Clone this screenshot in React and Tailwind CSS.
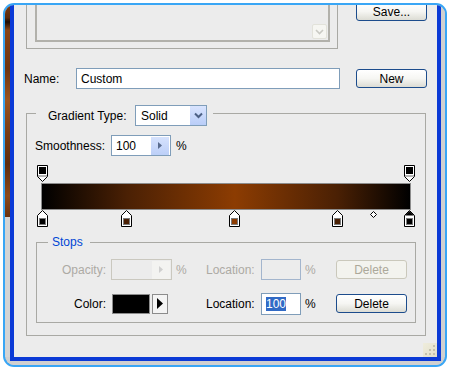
import React from "react";

const xpBtn =
  "flex items-center justify-center rounded-[3px] border border-[#1c4c8c] bg-linear-to-b from-white via-[#f6f6f3] to-[#dcdcd4] text-black";

function TopStop() {
  return (
    <svg width="11" height="17" viewBox="0 0 11 17" className="block">
      <path d="M0.5 0.5H10.5V11.5L5.5 16.5L0.5 11.5Z" fill="#fff" stroke="#000" />
      <rect x="2" y="2" width="7" height="7" fill="#000" />
      <rect x="1" y="10" width="9" height="2" fill="#b4b4b4" />
    </svg>
  );
}

function BottomStop({ color, selected }) {
  return (
    <svg width="11" height="17" viewBox="0 0 11 17" className="block">
      <path d="M5.5 0.5L10.5 5.5V16.5H0.5V5.5Z" fill="#fff" stroke="#000" />
      {selected && <path d="M5.5 1L10 5.5H1Z" fill="#000" />}
      <rect x="2.5" y="8.5" width="6" height="6" fill={color} stroke="#7a7a7a" />
    </svg>
  );
}

function Diamond() {
  return (
    <svg width="7" height="7" viewBox="0 0 7 7" className="block">
      <path d="M3.5 0.5L6.5 3.5L3.5 6.5L0.5 3.5Z" fill="#fff" stroke="#000" />
    </svg>
  );
}

const W = 367.5;
const colorStops = [
  { p: 0, c: "#000000" },
  { p: 0.23, c: "#4a2004" },
  { p: 0.524, c: "#8c3c02" },
  { p: 0.803, c: "#4a2004" },
  { p: 1, c: "#000000", sel: true },
];

export default function App() {
  return (
    <div className="w-[450px] h-[370px] bg-white pt-[3px] pl-[3px] pr-[3px] pb-[3px] font-['Liberation_Sans',Arial,sans-serif] text-[12px] text-black">
      <div className="h-[364px] rounded-[11px] border-2 border-[#39a6f5] overflow-hidden bg-[#cfcfcf] flex flex-col">
        <div className="flex h-[352px]">
          {/* photo strip */}
          <div className="w-[5px] flex flex-col">
            <div className="h-[212px] bg-[linear-gradient(to_bottom,#7a3a12_0%,#5a2a0c_6%,#1a0a04_8%,#8a4516_12%,#6e3410_30%,#9a5420_45%,#7a3d14_60%,#5e2c0e_75%,#8c4a1a_90%,#6a3210_100%)]" />
            <div className="flex-1 bg-[#d4d4d4]" />
          </div>
          <div className="w-[4px] bg-[#0b3ad6]" />
          {/* dialog */}
          <div className="relative w-[423px] bg-[#ececec] overflow-hidden flex flex-col">
            {/* top row */}
            <div className="flex h-[44px] items-end shrink-0">
              <div className="ml-[12px] w-[312px] h-[70px] border border-[#a9a9a4] pl-[8px] pr-[7px] pb-[6px] flex">
                <div className="relative flex-1 border-2 border-[#b2b1ab] bg-[#ececec]">
                  <div className="absolute right-[1px] bottom-[1px] w-[15px] h-[15px] rounded-[2px] bg-[#f6f6f2] border border-[#e2e2da] flex items-center justify-center">
                    <svg width="9" height="6" viewBox="0 0 9 6">
                      <path d="M1 1L4.5 4.5L8 1" fill="none" stroke="#c9c9c3" strokeWidth="1.6" />
                    </svg>
                  </div>
                </div>
              </div>
              <div className={`self-start -mt-[3px] ml-[18px] w-[71px] h-[19px] ${xpBtn}`}>Save...</div>
            </div>

            {/* name row */}
            <div className="mt-[19px] flex items-center h-[21px] pl-[10px] shrink-0">
              <div className="w-[52px]">Name:</div>
              <div className="w-[264px] h-[21px] border border-[#7f9db9] bg-white flex items-center pl-[4px]">Custom</div>
              <div className={`ml-[16px] w-[71px] h-[19px] ${xpBtn}`}>New</div>
            </div>

            {/* gradient type groupbox */}
            <div className="ml-[12px] mt-[24px] w-[400px] h-[223px] border border-[#a9a9a4] flex flex-col shrink-0">
              <div className="-mt-[9px] ml-[9px] self-start bg-[#ececec] pl-[12px] pr-[6px] flex items-center h-[21px]">
                <div className="w-[87px]">Gradient Type:</div>
                <div className="w-[72px] h-[21px] border border-[#7f9db9] bg-white flex items-center">
                  <div className="flex-1 pl-[5px]">Solid</div>
                  <div className="w-[16px] h-[19px] mr-[0px] bg-linear-to-b from-[#d9e4fe] to-[#b9cdf8] flex items-center justify-center">
                    <svg width="9" height="7" viewBox="0 0 9 7">
                      <path d="M1 1.5L4.5 5L8 1.5" fill="none" stroke="#4d6185" strokeWidth="2" />
                    </svg>
                  </div>
                </div>
              </div>

              <div className="mt-[9px] pl-[8px] flex items-center h-[21px]">
                <div className="w-[76px]">Smoothness:</div>
                <div className="w-[60px] h-[21px] border border-[#7f9db9] bg-white flex items-center">
                  <div className="flex-1 pl-[4px]">100</div>
                  <div className="w-[18px] h-[18px] mr-[1px] bg-linear-to-b from-[#d6e2fd] to-[#bccff8] flex items-center justify-center">
                    <svg width="4" height="7" viewBox="0 0 4 7">
                      <path d="M0 0L4 3.5L0 7Z" fill="#5a6c8f" />
                    </svg>
                  </div>
                </div>
                <div className="ml-[5px]">%</div>
              </div>

              {/* slider */}
              <div className="ml-[14px] mt-[9px] w-[370px] flex flex-col">
                <div className="relative h-[17px]">
                  <div className="absolute top-0" style={{ left: 1 + 0 * W - 5.5 }}>
                    <TopStop />
                  </div>
                  <div className="absolute top-0" style={{ left: 1 + 1 * W - 5.5 }}>
                    <TopStop />
                  </div>
                </div>
                <div className="mt-[1px] h-[27px] border border-[#8c8c8c] bg-[linear-gradient(to_right,#000_0%,#4a2004_23%,#8c3c02_52.4%,#4a2004_80.3%,#000_100%)]" />
                <div className="relative h-[17px]">
                  {colorStops.map((s, i) => (
                    <div key={i} className="absolute top-0" style={{ left: 1 + s.p * W - 5.5 }}>
                      <BottomStop color={s.c} selected={s.sel} />
                    </div>
                  ))}
                  <div className="absolute top-[1px]" style={{ left: 1 + 0.903 * W - 3.5 }}>
                    <Diamond />
                  </div>
                </div>
              </div>

              {/* stops groupbox */}
              <div className="ml-[9px] mt-[15px] w-[380px] h-[81px] border border-[#a9a9a4] flex flex-col">
                <div className="-mt-[9px] ml-[11px] self-start bg-[#ececec] pl-[4px] pr-[7px] h-[16px] flex items-center text-[#0046d5]">
                  Stops
                </div>
                {/* row 1 disabled */}
                <div className="mt-[9px] flex items-center h-[21px] text-[#acaaa4]">
                  <div className="w-[74px] pr-[5px] text-right">Opacity:</div>
                  <div className="w-[61px] h-[21px] border border-[#cac8bf] bg-[#ececec] flex items-center">
                    <div className="flex-1" />
                    <div className="w-[18px] h-[18px] mr-[1px] bg-[#f3f3f1] flex items-center justify-center">
                      <svg width="4" height="7" viewBox="0 0 4 7">
                        <path d="M0 0L4 3.5L0 7Z" fill="#cfcfcf" />
                      </svg>
                    </div>
                  </div>
                  <div className="w-[34px] pl-[4px]">%</div>
                  <div className="w-[55px]">Location:</div>
                  <div className="w-[40px] h-[21px] border border-[#a3b5cd] bg-[#ececec]" />
                  <div className="w-[35px] pl-[4px]">%</div>
                  <div className="w-[71px] h-[19px] rounded-[3px] border border-[#cac8bb] bg-[#f3f3ee] flex items-center justify-center text-[#aca899]">
                    Delete
                  </div>
                </div>
                {/* row 2 */}
                <div className="mt-[13px] flex items-center h-[21px]">
                  <div className="w-[75px] pr-[6px] text-right">Color:</div>
                  <div className="w-[38px] h-[20px] border border-[#8c8c8c] bg-black" />
                  <div className="ml-[2px] w-[16px] h-[20px] border border-[#8c8c8c] bg-[#f4f4f4] flex items-center justify-center">
                    <svg width="6" height="11" viewBox="0 0 6 11">
                      <path d="M0 0L6 5.5L0 11Z" fill="#000" />
                    </svg>
                  </div>
                  <div className="w-[38px]" />
                  <div className="w-[55px]">Location:</div>
                  <div className="w-[40px] h-[22px] border border-[#7f9db9] bg-white flex items-center pl-[4px]">
                    <span className="bg-[#316ac5] text-white leading-[14px]">100</span>
                  </div>
                  <div className="w-[35px] pl-[4px]">%</div>
                  <div className={`w-[71px] h-[19px] ${xpBtn}`}>Delete</div>
                </div>
              </div>
            </div>

            {/* resize grip */}
            <div className="absolute right-0 bottom-0 w-[14px] h-[14px] bg-linear-to-br from-[#efeddd] to-[#e2dfc8]">
              <svg width="14" height="14" viewBox="0 0 14 14" className="block">
                {[[10, 10], [6, 10], [2, 10], [10, 6], [6, 6], [10, 2]].map(([x, y], i) => (
                  <rect key={i} x={x} y={y} width="2" height="2" fill="#c4c1ad" />
                ))}
              </svg>
            </div>
          </div>
          <div className="w-[4px] bg-[#0b3ad6]" />
          <div className="flex-1 bg-[#d0d0d0]" />
        </div>
        <div className="h-[4px] ml-[5px] mr-[4px] bg-[#0b3ad6]" />
        <div className="flex-1 bg-[#d0d0d0]" />
      </div>
    </div>
  );
}
